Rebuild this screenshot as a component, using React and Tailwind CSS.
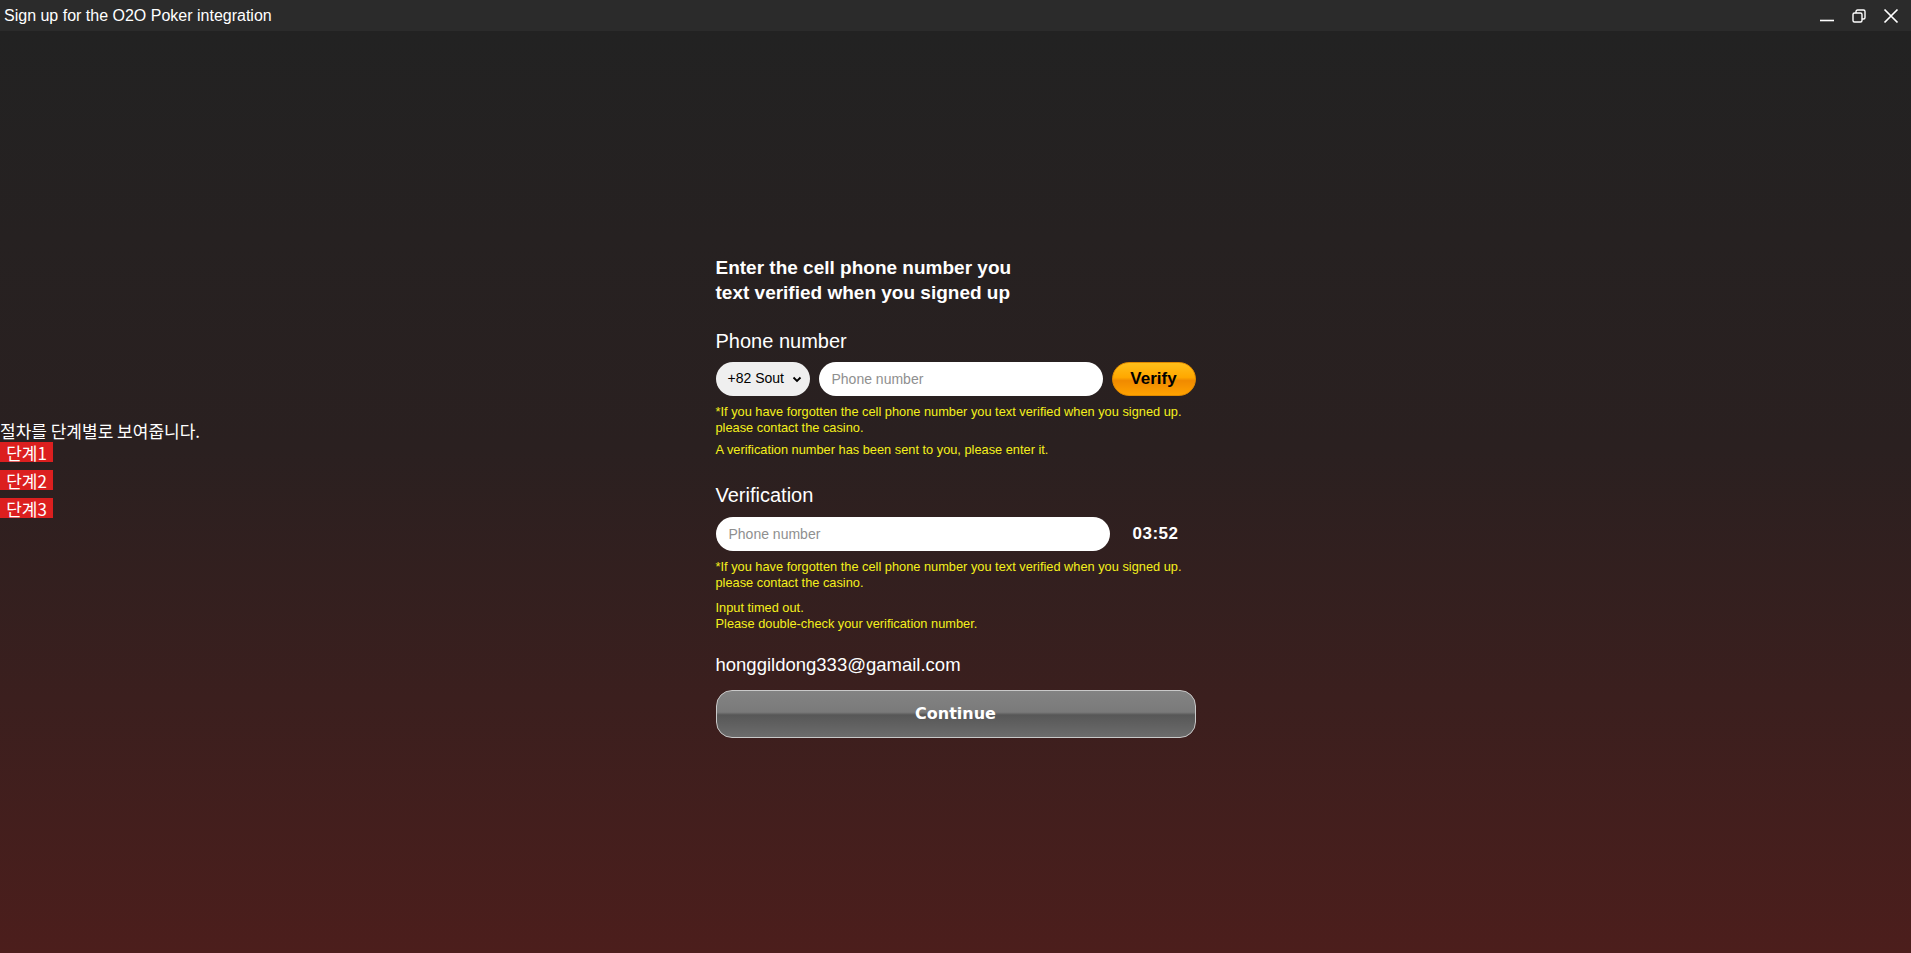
import React from "react";

function TitleBar() {
  return (
    <div className="flex h-[31px] items-center justify-between bg-[#2b2b2b] pl-[4px] pr-[12px]">
      <span className="text-[16px] text-white">Sign up for the O2O Poker integration</span>
      <div className="flex items-center gap-[16px] text-white">
        <svg width="16" height="16" viewBox="0 0 16 16">
          <path d="M1 12.5h14" stroke="white" strokeWidth="1.6" />
        </svg>
        <svg width="16" height="16" viewBox="0 0 16 16" fill="none" stroke="white" strokeWidth="1.4">
          <rect x="2" y="5" width="9" height="9" rx="1.5" />
          <path d="M5 5V3.5C5 2.7 5.7 2 6.5 2h6C13.3 2 14 2.7 14 3.5v6c0 .8-.7 1.5-1.5 1.5H11" />
        </svg>
        <svg width="16" height="16" viewBox="0 0 16 16" stroke="white" strokeWidth="1.7">
          <path d="M1.5 1.5l13 13M14.5 1.5l-13 13" />
        </svg>
      </div>
    </div>
  );
}

function StepList() {
  return (
    <div className="-mt-[46px] flex flex-col items-start self-center font-['Noto_Sans_CJK_KR',sans-serif] text-[17px] text-white">
      <p className="h-[22px] leading-[22px]">절차를 단계별로 보여줍니다.</p>
      <span className="mt-[0px] flex h-[20px] w-[53px] items-center justify-center bg-[#dc1f1f] leading-none">단계1</span>
      <span className="mt-[8px] flex h-[20px] w-[53px] items-center justify-center bg-[#dc1f1f] leading-none">단계2</span>
      <span className="mt-[8px] flex h-[20px] w-[53px] items-center justify-center bg-[#dc1f1f] leading-none">단계3</span>
    </div>
  );
}

function Note({ children, className = "" }) {
  return (
    <p className={`text-[12.8px] leading-[16px] text-[#f4f01c] ${className}`}>{children}</p>
  );
}

function SignUpForm() {
  return (
    <div className="mt-[8px] flex w-[480px] flex-col text-white">
      <h1 className="text-[19px] font-bold leading-[25px]">
        Enter the cell phone number you
        <br />
        text verified when you signed up
      </h1>

      <label className="mt-[24px] text-[20px] leading-[24px]">Phone number</label>
      <div className="mt-[9px] flex items-center gap-[9px]">
        <div className="flex h-[34px] w-[94px] items-center justify-between rounded-full bg-[#efefef] pl-[12px] pr-[8px] text-[14px] text-black">
          <span>+82 Sout</span>
          <svg width="10" height="10" viewBox="0 0 10 10" fill="none" stroke="black" strokeWidth="1.8">
            <path d="M1.5 3.5L5 7l3.5-3.5" />
          </svg>
        </div>
        <input
          className="h-[34px] w-[284px] rounded-full bg-white px-[13px] text-[14px] text-black outline-none placeholder:text-[#8f8f8f]"
          placeholder="Phone number"
        />
        <button className="h-[34px] w-[84px] rounded-full border border-[#e08a00] bg-[linear-gradient(to_bottom,#ffbf1a_0%,#ffa800_45%,#f08a00_55%,#ffa200_100%)] text-[17px] font-bold text-black">
          Verify
        </button>
      </div>
      <Note className="mt-[8px]">
        *If you have forgotten the cell phone number you text verified when you signed up.
        <br />
        please contact the casino.
      </Note>
      <Note className="mt-[6px]">A verification number has been sent to you, please enter it.</Note>

      <label className="mt-[25px] text-[20px] leading-[24px]">Verification</label>
      <div className="mt-[10px] flex items-center">
        <input
          className="h-[34px] w-[394px] rounded-full bg-white px-[13px] text-[14px] text-black outline-none placeholder:text-[#8f8f8f]"
          placeholder="Phone number"
        />
        <span className="ml-[23px] text-[17px] font-bold tracking-[0.5px]">03:52</span>
      </div>
      <Note className="mt-[8px]">
        *If you have forgotten the cell phone number you text verified when you signed up.
        <br />
        please contact the casino.
      </Note>
      <Note className="mt-[9px]">
        Input timed out.
        <br />
        Please double-check your verification number.
      </Note>

      <p className="mt-[22px] text-[18.5px] leading-[22px]">honggildong333@gamail.com</p>
      <button className="mt-[14px] h-[48px] w-[480px] rounded-[16px] border-[1.5px] border-[#c9c9c9] bg-[linear-gradient(to_bottom,#838383_0%,#7a7a7a_46%,#575757_52%,#5f5f5f_70%,#6c6c6c_100%)] font-['DejaVu_Sans',sans-serif] text-[16px] font-bold text-white">
        Continue
      </button>
    </div>
  );
}

export default function App() {
  return (
    <div className="flex h-[953px] w-full flex-col font-['Liberation_Sans',Arial,sans-serif]">
      <TitleBar />
      <div className="grid flex-1 grid-cols-[1fr_480px_1fr] items-center bg-[linear-gradient(to_bottom,#222222_0%,#2a2020_45%,#4c1e1c_100%)]">
        <StepList />
        <SignUpForm />
        <div />
      </div>
    </div>
  );
}
